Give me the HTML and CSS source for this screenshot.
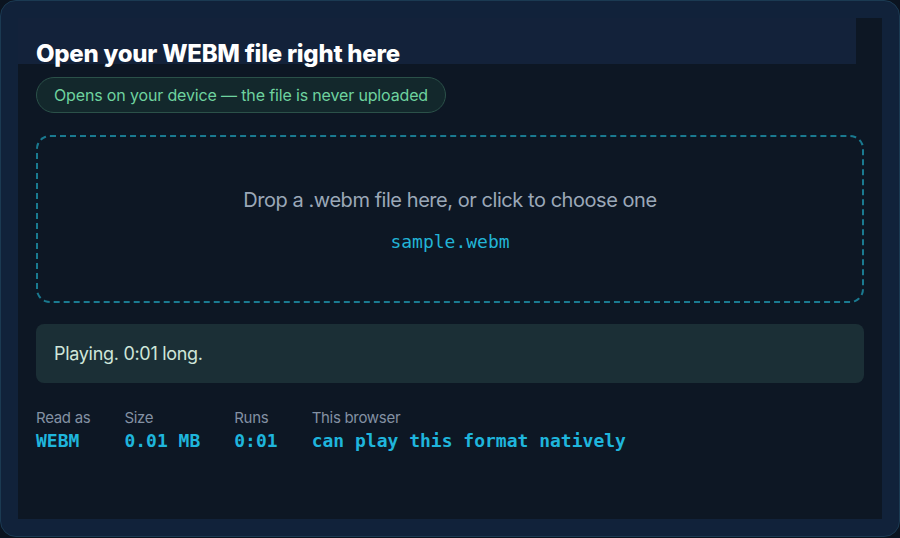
FILE: index.html
```html
<!DOCTYPE html>
<html lang="en">
<head>
<meta charset="utf-8">
<title>Open WEBM</title>
<link rel="stylesheet" href="styles.css">
</head>
<body>
<div class="card">
  <div class="panel">
    <h1 class="title">Open your WEBM file right here</h1>
    <div class="badge">Opens on your device — the file is never uploaded</div>
    <div class="drop">
      <div class="drop-text">Drop a .webm file here, or click to choose one</div>
      <div class="drop-file">sample.webm</div>
    </div>
    <div class="status">Playing. 0:01 long.</div>
    <div class="stats">
      <div class="stat"><div class="label">Read as</div><div class="value">WEBM</div></div>
      <div class="stat"><div class="label">Size</div><div class="value">0.01 MB</div></div>
      <div class="stat"><div class="label">Runs</div><div class="value">0:01</div></div>
      <div class="stat"><div class="label">This browser</div><div class="value">can play this format natively</div></div>
    </div>
  </div>
</div>
</body>
</html>
```
FILE: styles.css
```css
html, body {
  margin: 0;
  padding: 0;
  background: #0b1420;
}
body {
  font-family: Inter, "Noto Sans", sans-serif;
  width: 900px;
  height: 538px;
}
.card {
  box-sizing: border-box;
  width: 900px;
  height: 537px;
  border: 1px solid #1b3a52;
  border-radius: 16px;
  background: #11223a;
  padding: 17px 17px 17px 17px;
  display: flex;
}
.panel {
  flex: 1;
  box-sizing: border-box;
  padding: 20px 18px 0 18px;
  background: linear-gradient(#13223a, #13223a) no-repeat 0 0 / calc(100% - 26px) 46px, #0d1724;
}
.title {
  margin: 0;
  font-size: 24px;
  line-height: 32px;
  font-weight: 800;
  color: #ffffff;
  letter-spacing: -0.25px;
}
.badge {
  display: inline-block;
  margin-top: 7px;
  height: 36px;
  box-sizing: border-box;
  line-height: 34px;
  padding: 0 17px;
  border: 1px solid #2b5149;
  border-radius: 18px;
  background: #13282c;
  color: #6ed39f;
  font-size: 16px;
  letter-spacing: -0.15px;
}
.drop {
  margin-top: 22px;
  height: 168px;
  box-sizing: border-box;
  border: 2px dashed #1a7a90;
  border-radius: 14px;
  display: flex;
  flex-direction: column;
  align-items: center;
  padding-top: 49px;
}
.drop-text {
  font-size: 20px;
  line-height: 28px;
  color: #9ba8b8;
  letter-spacing: -0.45px;
}
.drop-file {
  margin-top: 17px;
  font-family: "DejaVu Sans Mono", monospace;
  font-size: 18px;
  color: #22b4d6;
}
.status {
  margin-top: 21px;
  height: 59px;
  box-sizing: border-box;
  border-radius: 8px;
  background: #1b2f36;
  padding: 0 18px;
  display: flex;
  align-items: center;
  font-size: 18px;
  color: #cfe6da;
  letter-spacing: -0.3px;
}
.stats {
  margin-top: 25px;
  display: flex;
  gap: 34px;
}
.label {
  font-size: 15px;
  line-height: 20px;
  color: #8391a3;
  letter-spacing: -0.3px;
}
.value {
  margin-top: 1px;
  font-family: "DejaVu Sans Mono", monospace;
  font-weight: 700;
  font-size: 18px;
  line-height: 24px;
  color: #1fb5dc;
}
```
